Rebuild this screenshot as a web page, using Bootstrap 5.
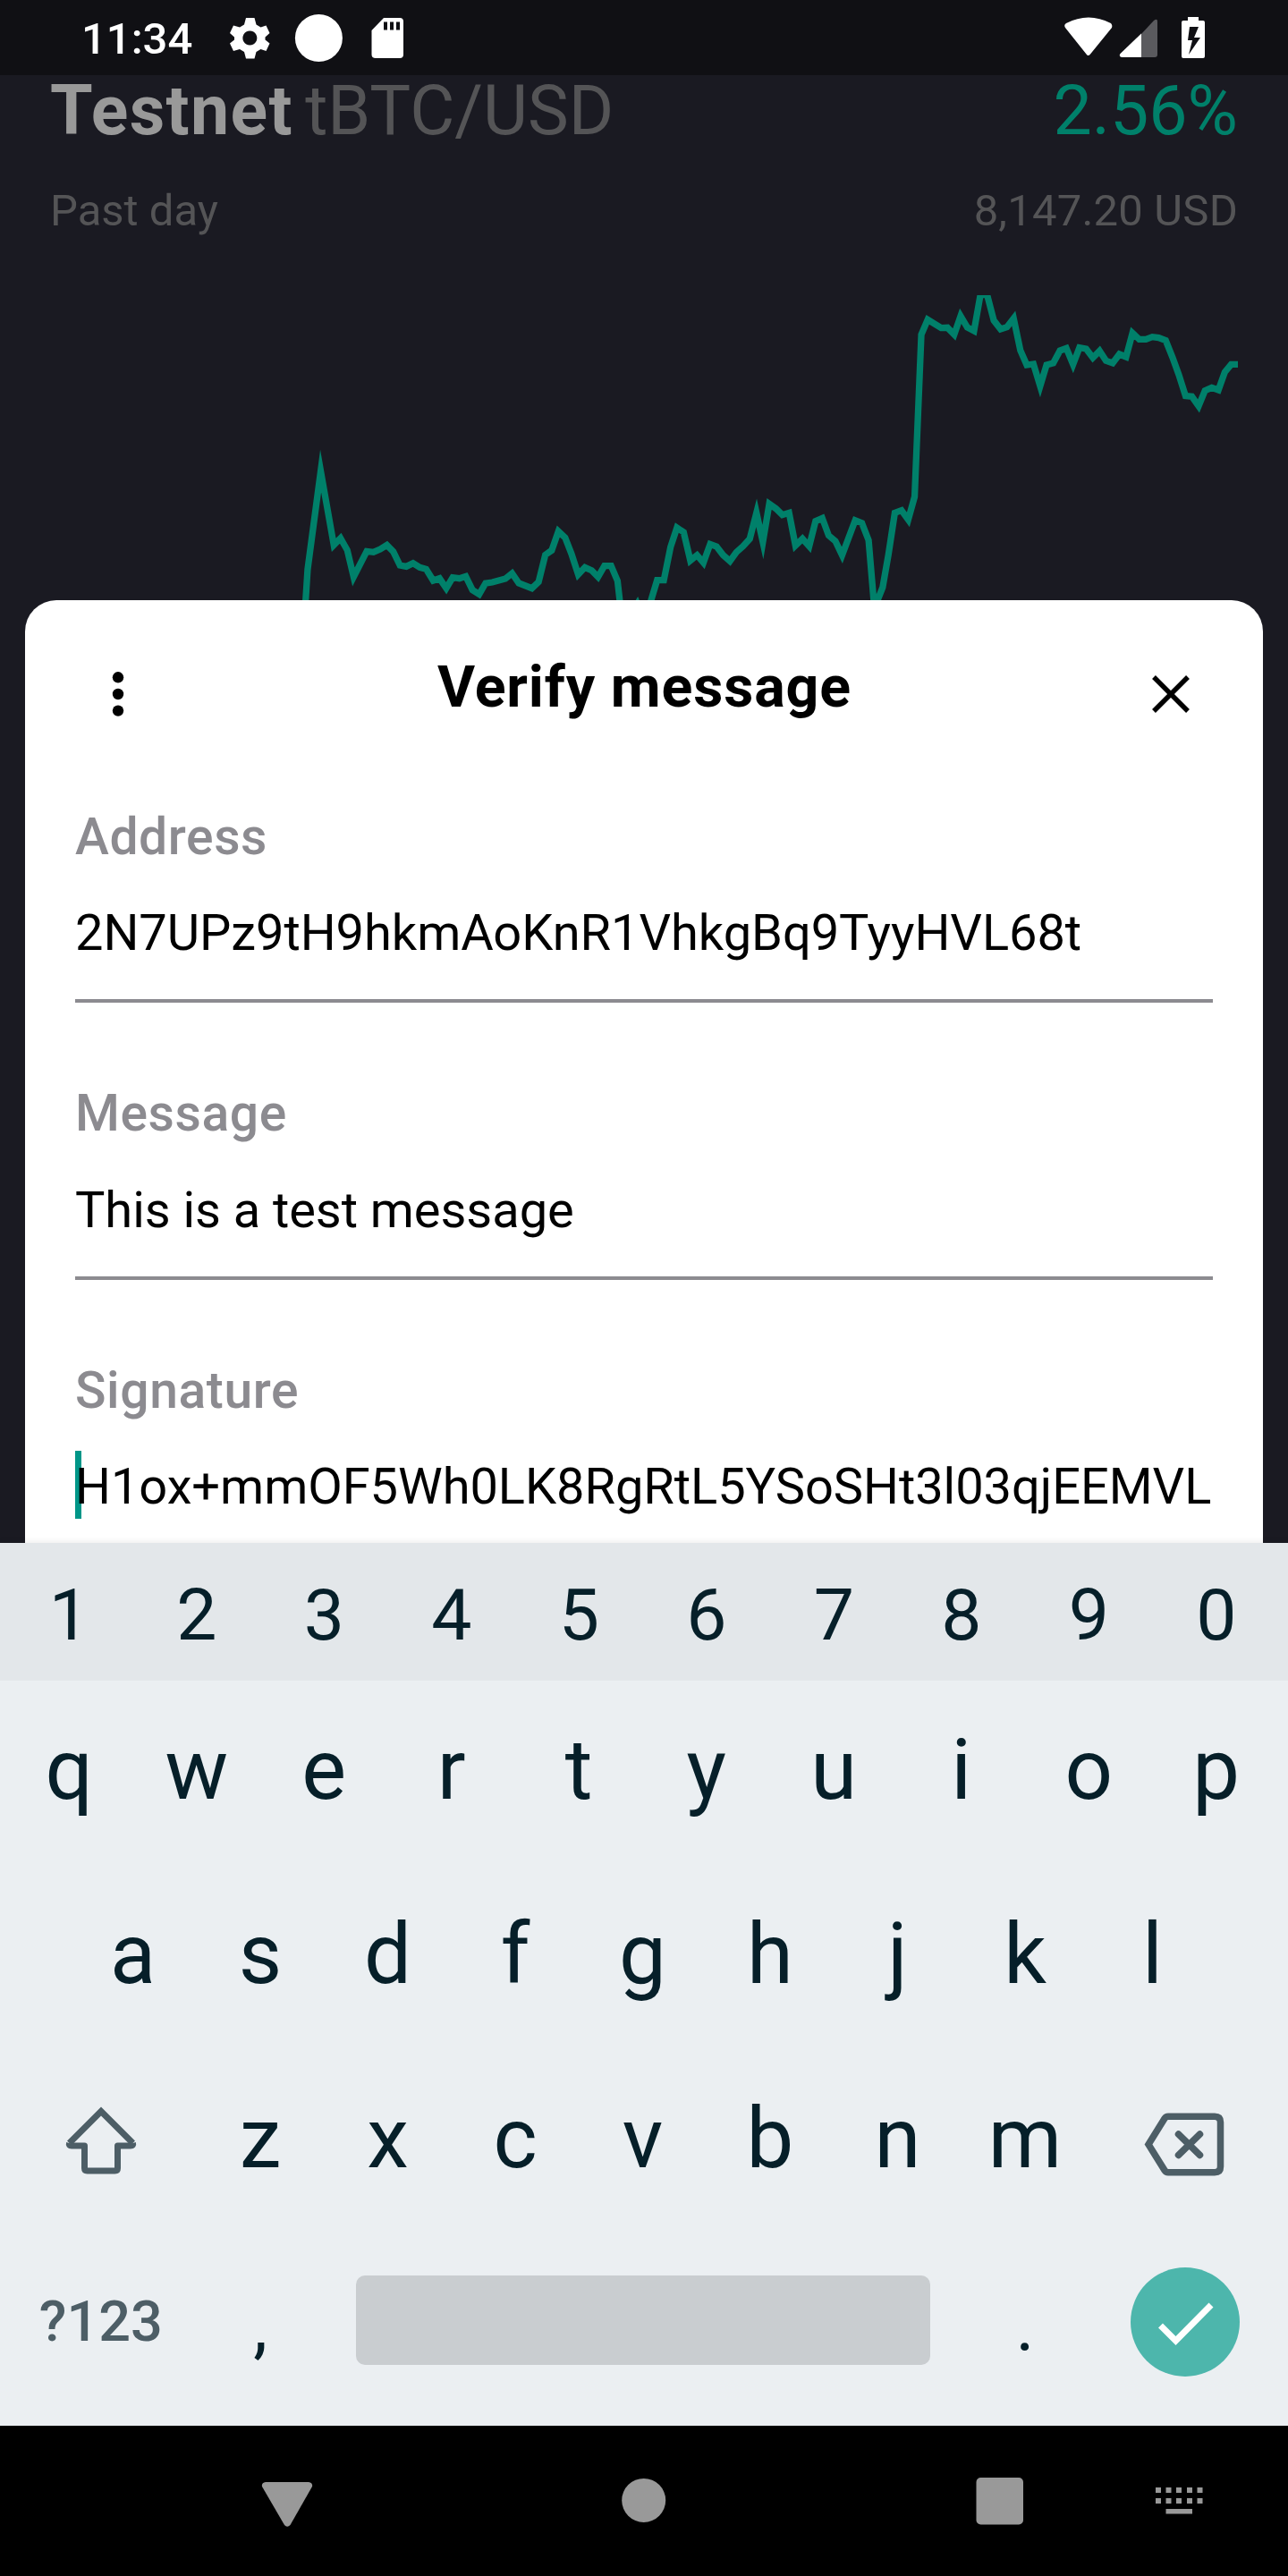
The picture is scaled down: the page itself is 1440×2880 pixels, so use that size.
<!DOCTYPE html>
<html lang="en">
<head>
<meta charset="utf-8">
<meta name="viewport" content="width=device-width, initial-scale=1">
<title>Verify message</title>
<link href="https://cdn.jsdelivr.net/npm/bootstrap@5.3.0/dist/css/bootstrap.min.css" rel="stylesheet">
<style>
  body { font-family: Roboto, "Liberation Sans", sans-serif; background: #1a1a22; width: 1440px; height: 2880px; overflow: hidden; }
  svg { display: block; flex: none; }
  .status-bar { height: 84px; background: #101014; color: #fff; padding: 0 93px 0 91px; }
  .clock { font-size: 49px; font-weight: 500; line-height: 60px; width: 166px; padding-top: 3px; }
  .market { height: 587px; padding: 0 56px; color: #545456; }
  .pair { font-size: 77px; line-height: 80px; white-space: nowrap; }
  .pair b { color: #999; font-weight: 700; letter-spacing: 1.4px; }
  .pair-code { margin-left: -6px; }
  .gain { color: #00806a; }
  .period { font-size: 49px; line-height: 60px; margin: 42px 0 64px; }
  .period-price { letter-spacing: .2px; }
  .chart { width: 1064px; height: 340.7px; margin-left: auto; }
  .sheet { height: 1054px; margin: 0 28px; padding: 56px 56px 0; background: #fff; color: #000; border-radius: 35px 35px 0 0; overflow: hidden; }
  .sheet-head { height: 174px; padding: 0 25px 0 26px; }
  .sheet-title { font-weight: 700; font-size: 64.5px; line-height: 82px; letter-spacing: .85px; margin: 0; }
  .field { margin-bottom: 89.1px; border-bottom: 4px solid #8c8b90; padding-bottom: 41px; white-space: nowrap; }
  .field-name { font-weight: 500; font-size: 57px; line-height: 69px; letter-spacing: .6px; color: #8c8b90; margin-bottom: 40.4px; }
  .field-value { font-size: 56px; line-height: 66px; letter-spacing: -.05px; }
  .caret { width: 7px; height: 76px; background: #009688; left: 0; top: -7px; }
  .keyboard { height: 987px; background: #ebeff2; color: #061f29; box-shadow: 0 0 8px rgba(0,0,0,.1); }
  .key-row { padding: 0 9px 0 6px; }
  .key { width: 142.5px; text-align: center; }
  .digits { height: 154px; background: #e3e7ea; font-size: 80.5px; line-height: 162px; }
  .letters { height: 206px; font-size: 94px; line-height: 200px; }
  .bottom-row { height: 194px; }
  .bottom-key { font-size: 80px; line-height: 120px; padding-top: 14px; }
  .side { width: 213.75px; display: flex; justify-content: center; }
  .sym { color: #4d5e66; font-size: 63px; font-weight: 500; padding-top: 5px; }
  .space { width: 642px; height: 100px; border-radius: 10px; background: #c9cdd0; }
  .nav-strip { height: 168px; background: #000; }
</style>
</head>
<body class="d-flex flex-column">
  <header class="status-bar d-flex align-items-center justify-content-between">
    <div class="d-flex align-items-center">
      <span class="clock">11:34</span>
      <svg width="196" height="56" viewBox="257 14 196 56" fill="#fff">
        <path fill-rule="evenodd" d="M275 20h9.500l2 7.500 5 3 6-2 4 8.500-5 4.500v3l5 4-4 8.500-6-2-5 3-2 7.500h-9.500l-2-7.500-5-3-7 2-4-8.500 5-4v-3l-5-4.500 4-8.500 7 2 5-3zM279.300 34.500a8 8 0 1 0 .1 0z"/>
        <circle cx="356.400" cy="42.500" r="26.500"/>
        <path fill-rule="evenodd" d="M429 20h18q4 0 4 4v37q0 4-4 4h-27q-4.500 0-4.500-4V34zM429 24.500v9h4v-9zM436 24.500v9h4v-9zM443 24.500v9h4v-9z"/>
      </svg>
    </div>
    <svg width="158" height="50" viewBox="1189 17 158 50" fill="#fff">
      <path d="M1191 31Q1189 28 1192 26Q1217 13 1242 26Q1244 28 1243 31L1219 60.500Q1216.500 63.500 1214.500 60.500z"/>
      <path fill="#5a5a5e" d="M1290 23q4-3 4 1v37q0 3-3 3h-15V38z"/>
      <path d="M1276 37.500V64h-22q-3.500-1-1.500-4z"/>
      <path fill-rule="evenodd" d="M1328 19h12v4h5q2 0 2 2v38q0 2-2 2h-22q-2 0-2-2V25q0-2 2-2h5zM1330 30l-2 15h5l-4 16 13-19h-7l5-12z"/>
    </svg>
  </header>

  <section class="market">
    <div class="pair d-flex justify-content-between">
      <div><b>Testnet</b> <span class="pair-code">tBTC/USD</span></div>
      <div class="gain">2.56%</div>
    </div>
    <div class="period d-flex justify-content-between">
      <span>Past day</span><span class="period-price">8,147.20 USD</span>
    </div>
    <svg class="chart" viewBox="0 90 2979 1022" preserveAspectRatio="none">
      <polyline fill="none" stroke="#00806a" stroke-width="7.300" stroke-miterlimit="20" vector-effect="non-scaling-stroke" points="58,1160 67,1010 108,680 149,928 170,905 191,945 211,1035 252,949 273,952 294,942 315,928 335,950 356,996 376,1000 397,989 418,1003 438,1009 460,1047 480,1040 501,1073 521,1037 542,1040 562,1033 583,1079 604,1093 624,1056 645,1053 686,1041 707,1023 728,1056 769,1073 790,1052 811,961 831,946 852,882 873,903 893,958 914,1027 935,1003 956,1013 976,1035 996,998 1017,998 1037,1048 1050,1170 1079,1160 1099,1125 1120,1180 1141,1117 1161,1046 1182,1046 1203,935 1223,870 1244,885 1265,980 1286,962 1306,987 1327,925 1347,933 1368,962 1389,982 1409,952 1430,932 1451,907 1472,820 1492,918 1512,790 1533,806 1553,827 1574,820 1594,930 1616,907 1637,932 1657,848 1678,838 1698,896 1719,915 1740,962 1781,845 1802,854 1823,912 1841,1140 1867,1070 1885,960 1905,820 1926,812 1947,843 1967,766 1988,222 2008,172 2050,200 2070,199 2091,222 2111,160 2132,198 2153,210 2173,89 2194,89 2215,175 2236,204 2256,197 2277,168 2298,275 2318,324 2339,321 2360,395 2380,324 2401,318 2422,276 2442,268 2463,322 2483,266 2504,270 2525,300 2546,277 2566,310 2587,318 2608,288 2629,297 2649,217 2670,238 2691,238 2711,230 2731,233 2753,242 2774,298 2794,357 2815,428 2835,430 2856,462 2876,410 2897,400 2918,408 2938,348 2958,322 2979,322"/>
    </svg>
  </section>

  <main class="sheet">
    <div class="sheet-head d-flex justify-content-between align-items-start">
      <svg width="44" height="98" fill="#000"><circle cx="22" cy="30.300" r="6.200"/><circle cx="22" cy="49" r="6.200"/><circle cx="22" cy="67.600" r="6.200"/></svg>
      <h1 class="sheet-title">Verify message</h1>
      <svg width="44" height="98" fill="none" stroke="#000" stroke-width="5.500"><path d="M3 30l38 38M41 30L3 68"/></svg>
    </div>
    <div class="field"><div class="field-name">Address</div><div class="field-value">2N7UPz9tH9hkmAoKnR1VhkgBq9TyyHVL68t</div></div>
    <div class="field"><div class="field-name">Message</div><div class="field-value">This is a test message</div></div>
    <div class="field"><div class="field-name">Signature</div><div class="field-value position-relative"><span class="caret position-absolute"></span><span class="position-relative">H1ox+mmOF5Wh0LK8RgRtL5YSoSHt3l03qjEEMVL</span></div></div>
  </main>

  <section class="keyboard position-relative">
    <div class="key-row digits d-flex">
      <span class="key">1</span><span class="key">2</span><span class="key">3</span><span class="key">4</span><span class="key">5</span><span class="key">6</span><span class="key">7</span><span class="key">8</span><span class="key">9</span><span class="key">0</span>
    </div>
    <div class="key-row letters d-flex">
      <span class="key">q</span><span class="key">w</span><span class="key">e</span><span class="key">r</span><span class="key">t</span><span class="key">y</span><span class="key">u</span><span class="key">i</span><span class="key">o</span><span class="key">p</span>
    </div>
    <div class="key-row letters d-flex justify-content-center">
      <span class="key">a</span><span class="key">s</span><span class="key">d</span><span class="key">f</span><span class="key">g</span><span class="key">h</span><span class="key">j</span><span class="key">k</span><span class="key">l</span>
    </div>
    <div class="key-row letters d-flex">
      <span class="side"><svg width="80" height="200" viewBox="73 2291 80 200" fill="none" stroke="#4d5e66" stroke-width="7" stroke-linejoin="round"><path stroke-linejoin="miter" d="M77.500 2396L113 2360.500 148.500 2396"/><path d="M77.500 2396q-1 3 2.500 3h14.500v25q0 3 3 3h31q3 0 3-3v-25H146q3.500 0 2.500-3"/></svg></span>
      <span class="key">z</span><span class="key">x</span><span class="key">c</span><span class="key">v</span><span class="key">b</span><span class="key">n</span><span class="key">m</span>
      <span class="side"><svg width="90" height="200" viewBox="1279 2291 90 200" fill="none" stroke="#4d5e66" stroke-width="7.500"><path d="M1284 2397.500l18-29q1.500-2.300 4-2.300h52q6.500 0 6.500 6.500v49.500q0 6.500-6.500 6.500h-52q-2.500 0-4-2.300z"/><path stroke-linecap="round" d="M1317.500 2386l24 23.500M1341.500 2386l-24 23.500"/></svg></span>
    </div>
    <div class="key-row bottom-row d-flex align-items-center">
      <span class="side sym">?123</span>
      <span class="key bottom-key">,</span>
      <span class="flex-grow-1 d-flex justify-content-center"><span class="space"></span></span>
      <span class="key bottom-key">.</span>
      <span class="side"><svg width="126" height="126" viewBox="1261 2531 126 126"><circle cx="1325" cy="2596" r="61" fill="#4db6ac"/><path fill="none" stroke="#fff" stroke-width="7" d="M1297.500 2600l17 17 39.500-40"/></svg></span>
    </div>
  </section>

  <footer class="nav-strip">
    <svg width="1440" height="168" viewBox="0 2712 1440 168" fill="#999">
      <path d="M297 2775h48q5 1 4 5l-24.500 43q-3.500 3.500-6.500 0l-25-43q-1-4 4-5z"/>
      <circle cx="719.700" cy="2795.400" r="24.500"/>
      <rect x="1091.500" y="2770" width="52.500" height="52.500" rx="5"/>
      <path d="M1292 2781h6v6h-6zM1303.500 2781h6v6h-6zM1315 2781h6v6h-6zM1327 2781h6v6h-6zM1338.500 2781h6v6h-6zM1292 2793h6v6h-6zM1303.500 2793h6v6h-6zM1315 2793h6v6h-6zM1327 2793h6v6h-6zM1338.500 2793h6v6h-6zM1303.500 2805h29.500v5.500h-29.500z"/>
    </svg>
  </footer>
<script src="https://cdn.jsdelivr.net/npm/bootstrap@5.3.0/dist/js/bootstrap.bundle.min.js"></script>
</body>
</html>
